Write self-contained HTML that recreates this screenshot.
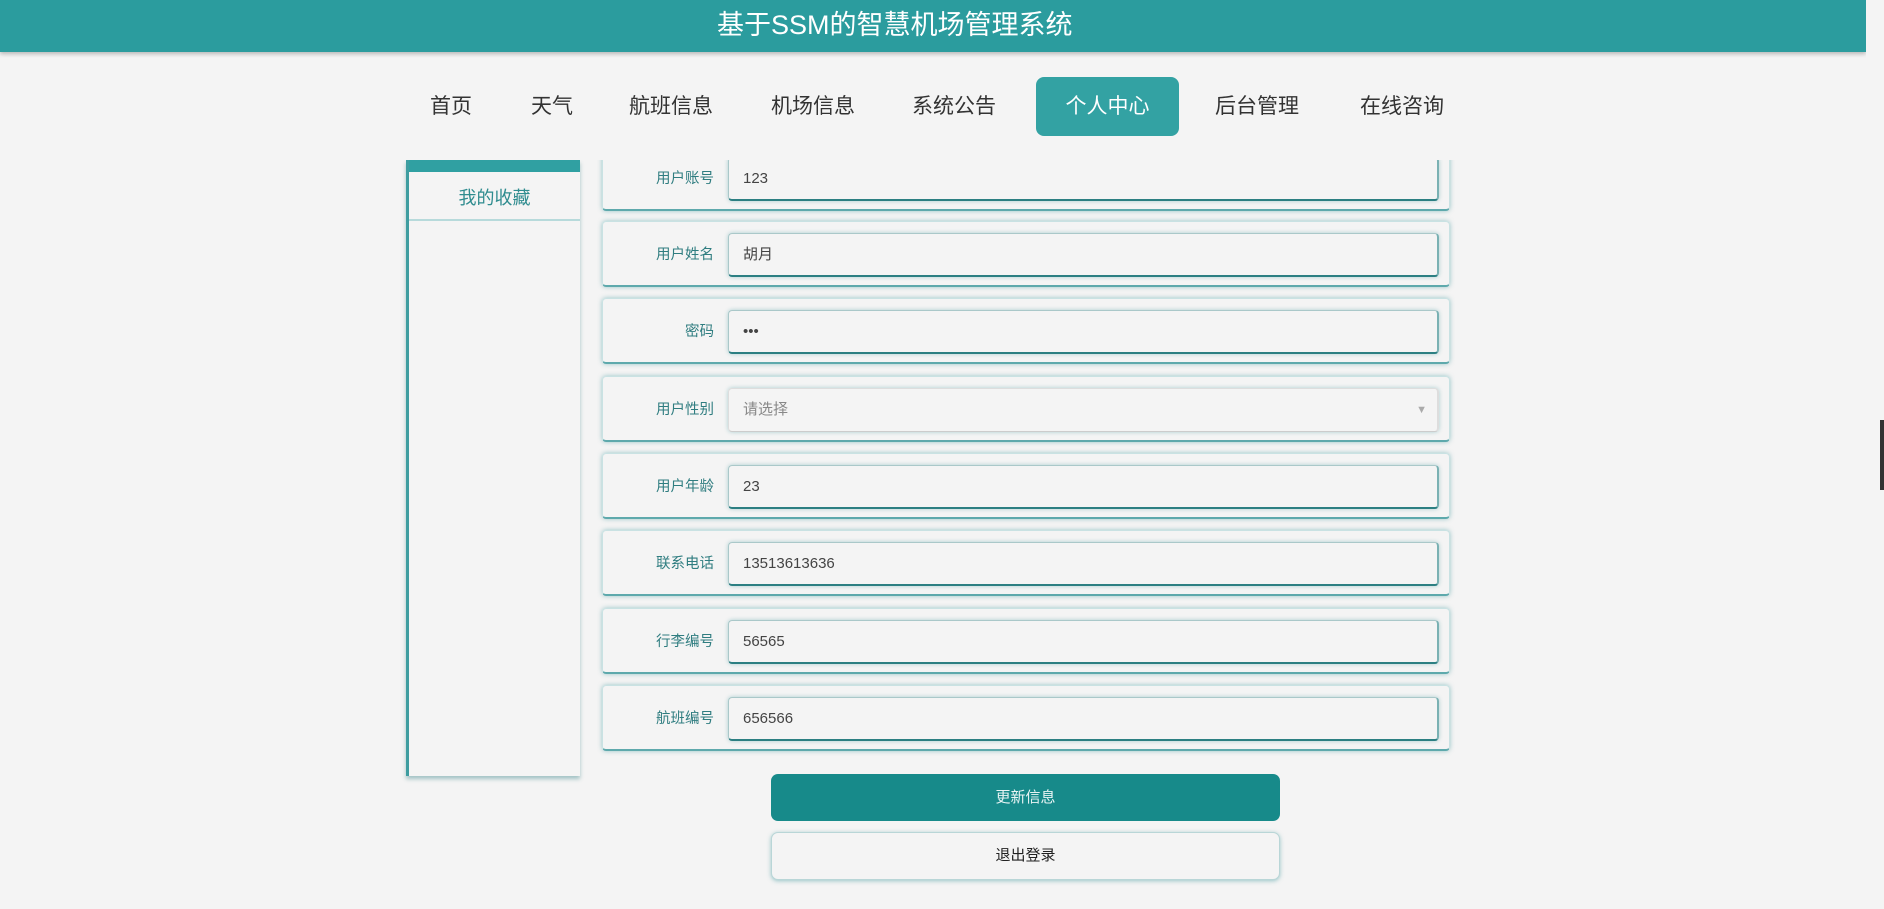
<!DOCTYPE html>
<html><head><meta charset="utf-8"><style>
*{box-sizing:border-box;margin:0;padding:0}
body{width:1884px;height:909px;background:#f4f4f4;font-family:"Liberation Sans","Noto Sans CJK SC",sans-serif;position:relative;overflow:hidden}
.hdr{position:absolute;left:0;top:0;width:1866px;height:52px;background:#2b9c9e;box-shadow:0 2px 4px rgba(0,0,0,.25);color:#fff;font-size:27px;line-height:50px}
.hdr span{position:absolute;left:717px;top:0}
.sb{position:absolute;right:0;top:0;width:18px;height:909px;background:#f4f4f4}
.nav{position:absolute;top:77px;height:59px;line-height:59px;font-size:21px;color:#333}
.act{background:#33a2a3;color:#fff;border-radius:8px;text-align:center;width:143px}
.clip{position:absolute;left:0;top:160px;width:1866px;height:749px;overflow:hidden}
.left{position:absolute;left:406px;top:0;width:174px;height:616px;border-left:3px solid #3e9da0;box-shadow:0 3px 4px rgba(40,120,125,.4)}
.left .bar{height:12px;background:#30a0a2}
.left .it{height:49px;line-height:52px;text-align:center;color:#2f8c8f;font-size:18px;border-bottom:2px solid #b7dadb}
.row{position:absolute;left:602px;width:848px;height:66px;border:1px solid #c9e2e3;border-bottom:2px solid #5ea9ac;border-radius:4px;box-shadow:0 0 5px rgba(60,150,155,.5)}
.row label{position:absolute;right:735px;top:0;line-height:66px;font-size:14.5px;color:#2f7d80}
.row .in{position:absolute;left:125px;top:11px;width:711px;height:44px;border:1px solid #aac8c9;border-bottom:2px solid #2c7f82;border-right:2px solid #7ab1b3;border-radius:4px;padding-left:14px;line-height:42px;font-size:15px;color:#444;box-shadow:0 0 4px rgba(60,150,155,.4)}
.btn{position:absolute;left:771px;width:509px;border-radius:7px;text-align:center;font-size:15px}
</style></head><body>
<div class="hdr"><span>基于SSM的智慧机场管理系统</span></div>
<div class="nav" style="left:430px">首页</div>
<div class="nav" style="left:531px">天气</div>
<div class="nav" style="left:629px">航班信息</div>
<div class="nav" style="left:771px">机场信息</div>
<div class="nav" style="left:912px">系统公告</div>
<div class="nav act" style="left:1036px">个人中心</div>
<div class="nav" style="left:1215px">后台管理</div>
<div class="nav" style="left:1360px">在线咨询</div>
<div class="clip">
 <div class="left"><div class="bar"></div><div class="it">我的收藏</div></div>
 <div class="row" style="top:-15px"><label>用户账号</label><div class="in">123</div></div>
 <div class="row" style="top:61px"><label>用户姓名</label><div class="in">胡月</div></div>
 <div class="row" style="top:138px"><label>密码</label><div class="in">•••</div></div>
 <div class="row" style="top:216px"><label>用户性别</label><div class="in" style="color:#888;border-color:#ddd;border-bottom:1px solid #ccc">请选择<span style="position:absolute;right:10px;top:0;font-size:11px;color:#aaa">▼</span></div></div>
 <div class="row" style="top:293px"><label>用户年龄</label><div class="in">23</div></div>
 <div class="row" style="top:370px"><label>联系电话</label><div class="in">13513613636</div></div>
 <div class="row" style="top:448px"><label>行李编号</label><div class="in">56565</div></div>
 <div class="row" style="top:525px"><label>航班编号</label><div class="in">656566</div></div>
</div>
<div class="btn" style="top:774px;height:47px;line-height:47px;background:#178a8a;color:#e8f4f4">更新信息</div>
<div class="btn" style="top:832px;height:48px;line-height:46px;background:#f4f4f4;border:1px solid #b9d6d7;box-shadow:0 1px 4px rgba(60,150,155,.5);color:#222">退出登录</div>
<div class="sb"></div>
<div style="position:absolute;right:0;top:420px;width:4px;height:70px;background:#333"></div>
</body></html>
